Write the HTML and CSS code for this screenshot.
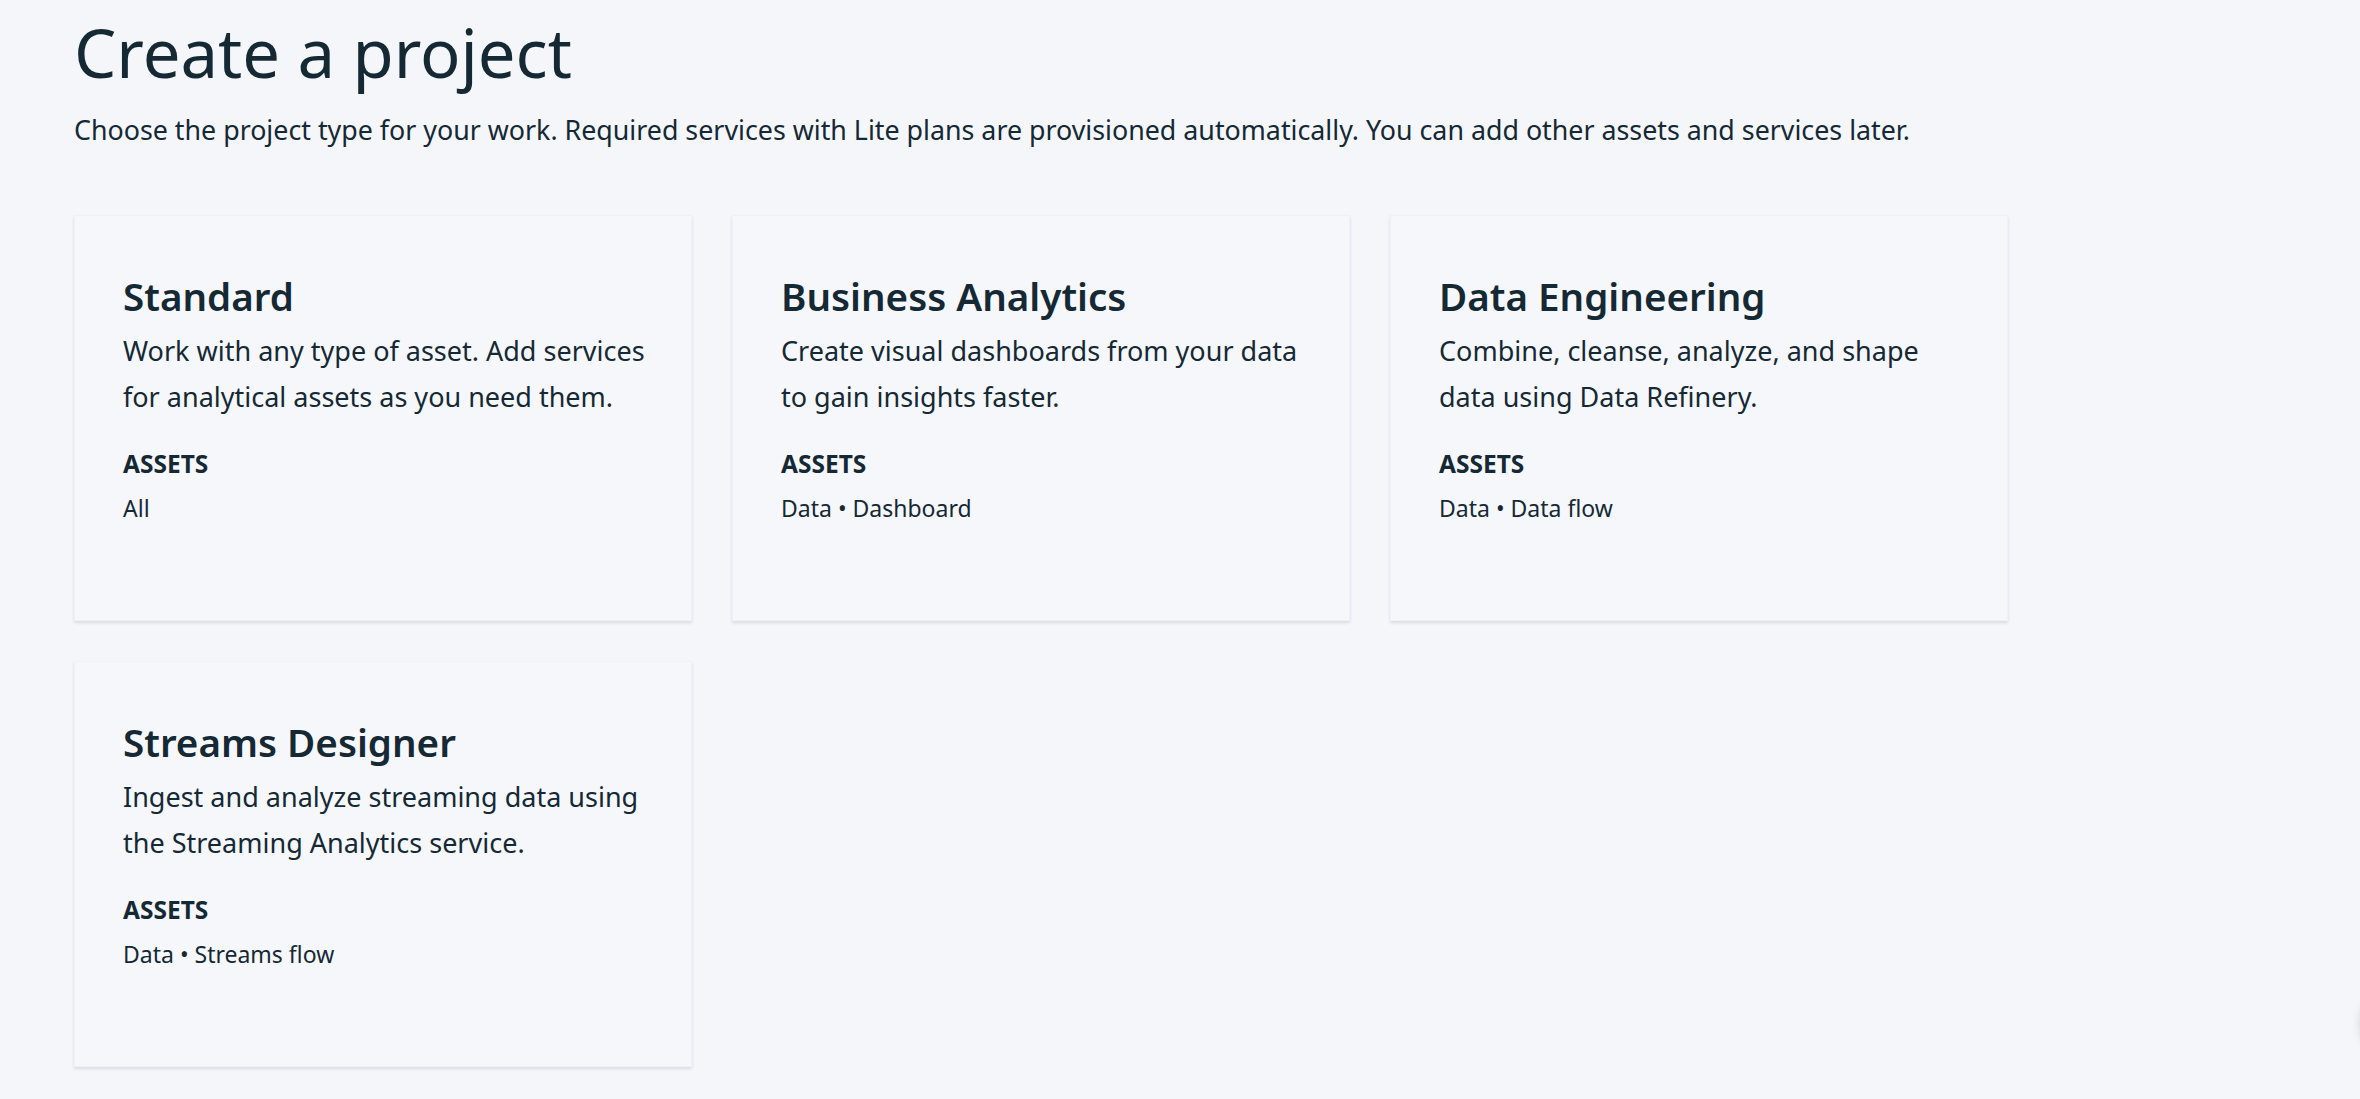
FILE: index.html
```html
<!DOCTYPE html>
<html lang="en">
<head>
<meta charset="utf-8">
<title>Create a project</title>
<link rel="stylesheet" href="styles.css">
</head>
<body>
<main class="page">
  <h1 class="page-title">Create a project</h1>
  <p class="page-intro">Choose the project type for your work. Required services with Lite plans are provisioned automatically. You can add other assets and services later.</p>
  <div class="tiles">
    <section class="tile">
      <h2 class="tile-title">Standard</h2>
      <p class="tile-desc">Work with any type of asset. Add services for analytical assets as you need them.</p>
      <h3 class="tile-label">ASSETS</h3>
      <p class="tile-assets">All</p>
    </section>
    <section class="tile">
      <h2 class="tile-title">Business Analytics</h2>
      <p class="tile-desc">Create visual dashboards from your data to gain insights faster.</p>
      <h3 class="tile-label">ASSETS</h3>
      <p class="tile-assets">Data • Dashboard</p>
    </section>
    <section class="tile">
      <h2 class="tile-title">Data Engineering</h2>
      <p class="tile-desc">Combine, cleanse, analyze, and shape data using Data Refinery.</p>
      <h3 class="tile-label">ASSETS</h3>
      <p class="tile-assets">Data • Data flow</p>
    </section>
    <section class="tile">
      <h2 class="tile-title">Streams Designer</h2>
      <p class="tile-desc">Ingest and analyze streaming data using the Streaming Analytics service.</p>
      <h3 class="tile-label">ASSETS</h3>
      <p class="tile-assets">Data • Streams flow</p>
    </section>
  </div>
</main>
<div class="float-btn" aria-hidden="true"></div>
</body>
</html>
```
FILE: styles.css
```css
html, body {
  margin: 0;
  padding: 0;
  background: #f4f6fa;
  color: #152935;
  font-family: "Noto Sans", "Open Sans", sans-serif;
  overflow: hidden;
}

.page {
  padding: 0 0 0 74px;
  height: 1099px;
  box-sizing: border-box;
}

.page-title {
  margin: 0;
  padding-top: 8px;
  font-size: 67px;
  font-weight: 400;
  line-height: 88px;
  letter-spacing: 0;
}

.page-intro {
  margin: 16px 0 0;
  font-size: 26.8px;
  line-height: 36px;
}

.tiles {
  margin-top: 67px;
  display: flex;
  flex-wrap: wrap;
  gap: 40px;
  width: 1934px;
}

.tile {
  width: 618px;
  height: 406px;
  box-sizing: border-box;
  padding: 54px 36px 0 48px;
  background: #f5f7fb;
  border: 1px solid #eef1f5;
  box-shadow: 0 2px 3px rgba(21, 41, 53, 0.12);
}

.tile-title {
  margin: 0;
  font-size: 38.6px;
  font-weight: 600;
  line-height: 52px;
}

.tile-desc {
  margin: 6px 0 0;
  font-size: 27px;
  line-height: 46px;
}

.tile-label {
  margin: 28px 0 0;
  font-size: 24.5px;
  font-weight: 700;
  line-height: 32px;
}

.tile-assets {
  margin: 11px 0 0;
  font-size: 23px;
  line-height: 34px;
}

.float-btn {
  position: fixed;
  right: -74px;
  top: 986px;
  width: 72px;
  height: 72px;
  border-radius: 50%;
  background: #f4f6fa;
  box-shadow: 0 2px 12px rgba(0, 0, 0, 0.2);
}
```
